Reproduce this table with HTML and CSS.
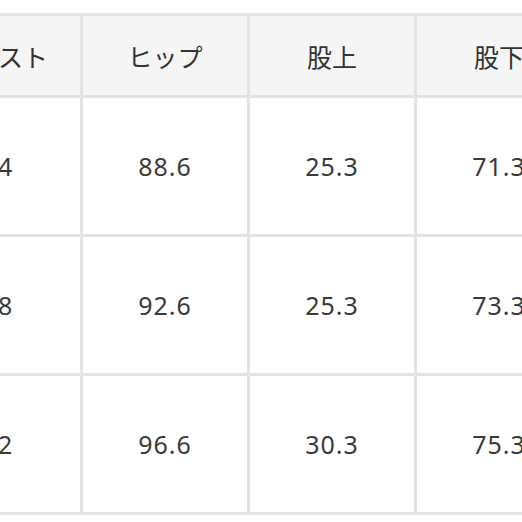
FILE: index.html
```html
<!DOCTYPE html>
<html lang="ja">
<head>
<meta charset="utf-8">
<link rel="stylesheet" href="styles.css">
</head>
<body>
<table class="size-table">
  <thead>
    <tr>
      <th>ウエスト</th>
      <th>ヒップ</th>
      <th>股上</th>
      <th>股下</th>
    </tr>
  </thead>
  <tbody>
    <tr><td>64</td><td>88.6</td><td>25.3</td><td>71.3</td></tr>
    <tr><td>68</td><td>92.6</td><td>25.3</td><td>73.3</td></tr>
    <tr><td>72</td><td>96.6</td><td>30.3</td><td>75.3</td></tr>
  </tbody>
</table>
</body>
</html>
```

FILE: styles.css
```css
html, body {
  margin: 0;
  padding: 0;
  background: #ffffff;
  overflow: hidden;
}

.size-table {
  width: 671px;
  min-width: 671px;
  margin-top: 13px;
  margin-left: -87px;
  border-collapse: separate;
  border-spacing: 3px;
  background: #e3e3e3;
  table-layout: fixed;
  font-family: "Noto Sans CJK JP", "Noto Sans", sans-serif;
  font-size: 25px;
  color: #333333;
}

.size-table th,
.size-table td {
  width: 164px;
  padding: 0;
  text-align: center;
  vertical-align: middle;
  background: #ffffff;
}

.size-table th {
  height: 79px;
  font-weight: 400;
  background: #f5f5f5;
}

.size-table td {
  height: 136px;
  font-family: "Noto Sans", "Noto Sans CJK JP", sans-serif;
  letter-spacing: 1px;
  color: #3a3a3a;
}
```
